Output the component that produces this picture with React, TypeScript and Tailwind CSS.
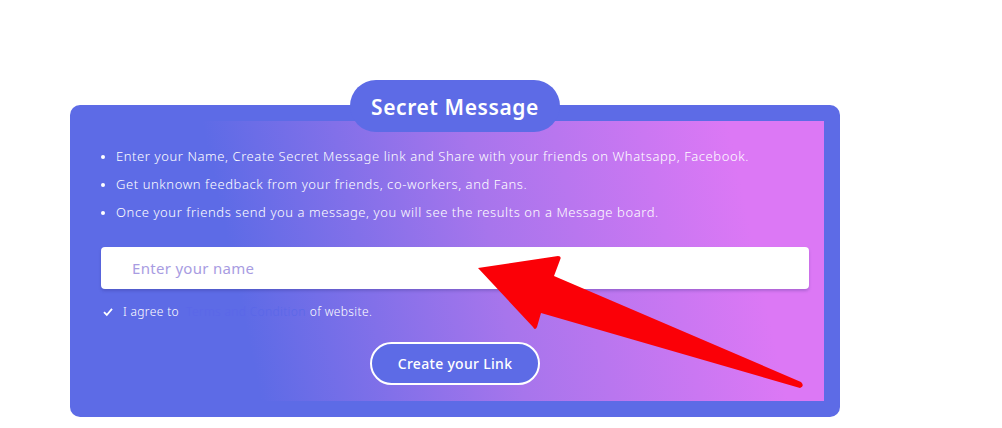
import React from 'react';

const points = [
  'Enter your Name, Create Secret Message link and Share with your friends on Whatsapp, Facebook.',
  'Get unknown feedback from your friends, co-workers, and Fans.',
  'Once your friends send you a message, you will see the results on a Message board.',
];

const App = () => {
  return (
    <div className="relative w-[1002px] h-[428px] bg-white font-['Noto_Sans','Liberation_Sans',sans-serif] overflow-hidden">
      <div className="pt-[80px] pl-[70px] w-[840px]">
        {/* tab */}
        <div className="relative z-10 flex justify-center -mb-[27px]">
          <div className="w-[210px] h-[52px] rounded-[26px] bg-[#5d6be6] flex items-center justify-center pt-[3px] text-white text-[21px] font-semibold tracking-[0.6px]">
            Secret Message
          </div>
        </div>

        {/* card */}
        <div className="w-[770px] h-[312px] rounded-[10px] bg-[#5d6be6] p-[16px]">
          <div className="h-full bg-[linear-gradient(78deg,#5d6be6_22%,#a775ec_55%,#dc78f5_88%)] px-[15px] pt-[27px]">
            <ul className="flex flex-col gap-[11px] text-white text-[13px] font-light tracking-[0.58px]">
              {points.map((p) => (
                <li key={p} className="flex items-center h-[17px]">
                  <span className="w-[4px] h-[4px] rounded-full bg-white mr-[11px]" />
                  {p}
                </li>
              ))}
            </ul>

            {/* name input */}
            <div className="mt-[26px] h-[42px] bg-white rounded-[4px] shadow-[0_2px_3px_rgba(40,40,120,0.25)] flex items-center pl-[31px] text-[15px] tracking-[0.3px] text-[#a89ce2]">
              Enter your name
            </div>

            <div className="mt-[14px] flex items-center text-white text-[12px] font-light tracking-[0.35px]">
              <svg width="10" height="10" viewBox="0 0 10 10" className="ml-[2px] mr-[10px]">
                <path d="M1 5.2 L3.8 8 L9 1.8" stroke="white" strokeWidth="1.8" fill="none" />
              </svg>
              <span>I agree to</span>
              <span className="ml-[7px] mr-[4px] text-[#5b67e8]">Terms and Condition</span>
              <span>of website.</span>
            </div>

            <div className="mt-[21px] flex justify-center">
              <button className="w-[170px] h-[43px] rounded-full border-2 border-white bg-[#5d6be6] text-white text-[14px] font-medium tracking-[0.3px]">
                Create your Link
              </button>
            </div>
          </div>
        </div>
      </div>

      {/* red arrow annotation */}
      <svg className="absolute left-0 top-0 pointer-events-none" width="1002" height="428">
        <path
          d="M478 268 L558 256 Q562 256 560 260 L554 276 L801 382 Q805 386 800 388 L541 313 L537 327 Q535 331 533 327 Z"
          fill="#fb0007"
        />
      </svg>
    </div>
  );
};

export default App;
